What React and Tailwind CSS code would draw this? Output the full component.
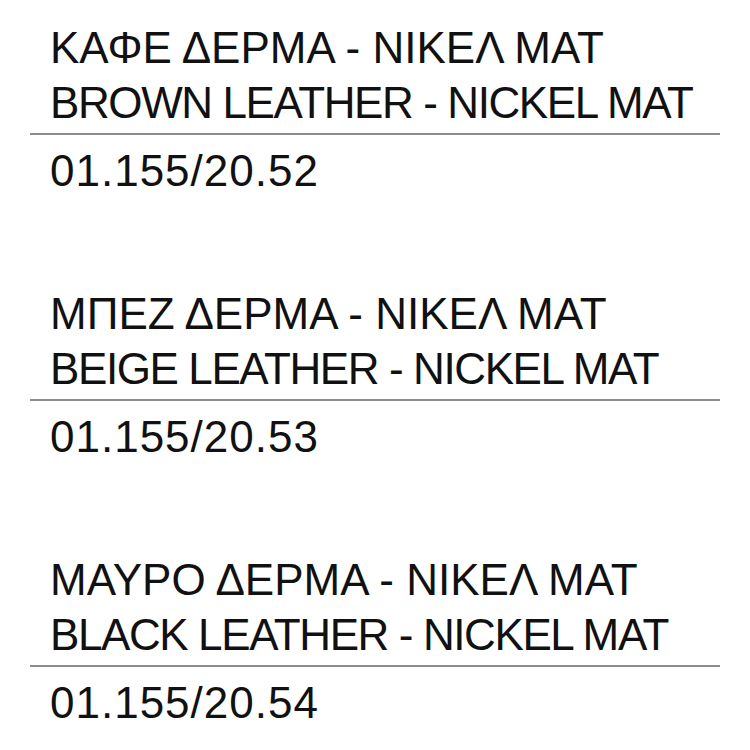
export default function App() {
  const items = [
    ["ΚΑΦΕ ΔΕΡΜΑ - ΝΙΚΕΛ ΜΑΤ", "BROWN LEATHER - NICKEL MAT", "01.155/20.52"],
    ["ΜΠΕΖ ΔΕΡΜΑ - ΝΙΚΕΛ ΜΑΤ", "BEIGE LEATHER - NICKEL MAT", "01.155/20.53"],
    ["ΜΑΥΡΟ ΔΕΡΜΑ - ΝΙΚΕΛ ΜΑΤ", "BLACK LEATHER - NICKEL MAT", "01.155/20.54"],
  ];
  return (
    <div className="w-[750px] h-[750px] bg-white overflow-hidden pt-[20px] pl-[30px]" style={{ fontFamily: '"Liberation Sans", Arial, sans-serif' }}>
      {items.map((it, i) => (
        <div key={i} className="w-[690px] h-[266px] flex flex-col text-[#111] text-[44px] leading-[55px] whitespace-nowrap">
          <div className="pl-[20px]">{it[0]}</div>
          <div className="pl-[20px] tracking-[-1.4px]">{it[1]}</div>
          <div className="mt-[3px] h-[2px] bg-[#8c8c8c]" />
          <div className="pl-[20px] mt-[8px] tracking-[1px]">{it[2]}</div>
        </div>
      ))}
    </div>
  );
}
